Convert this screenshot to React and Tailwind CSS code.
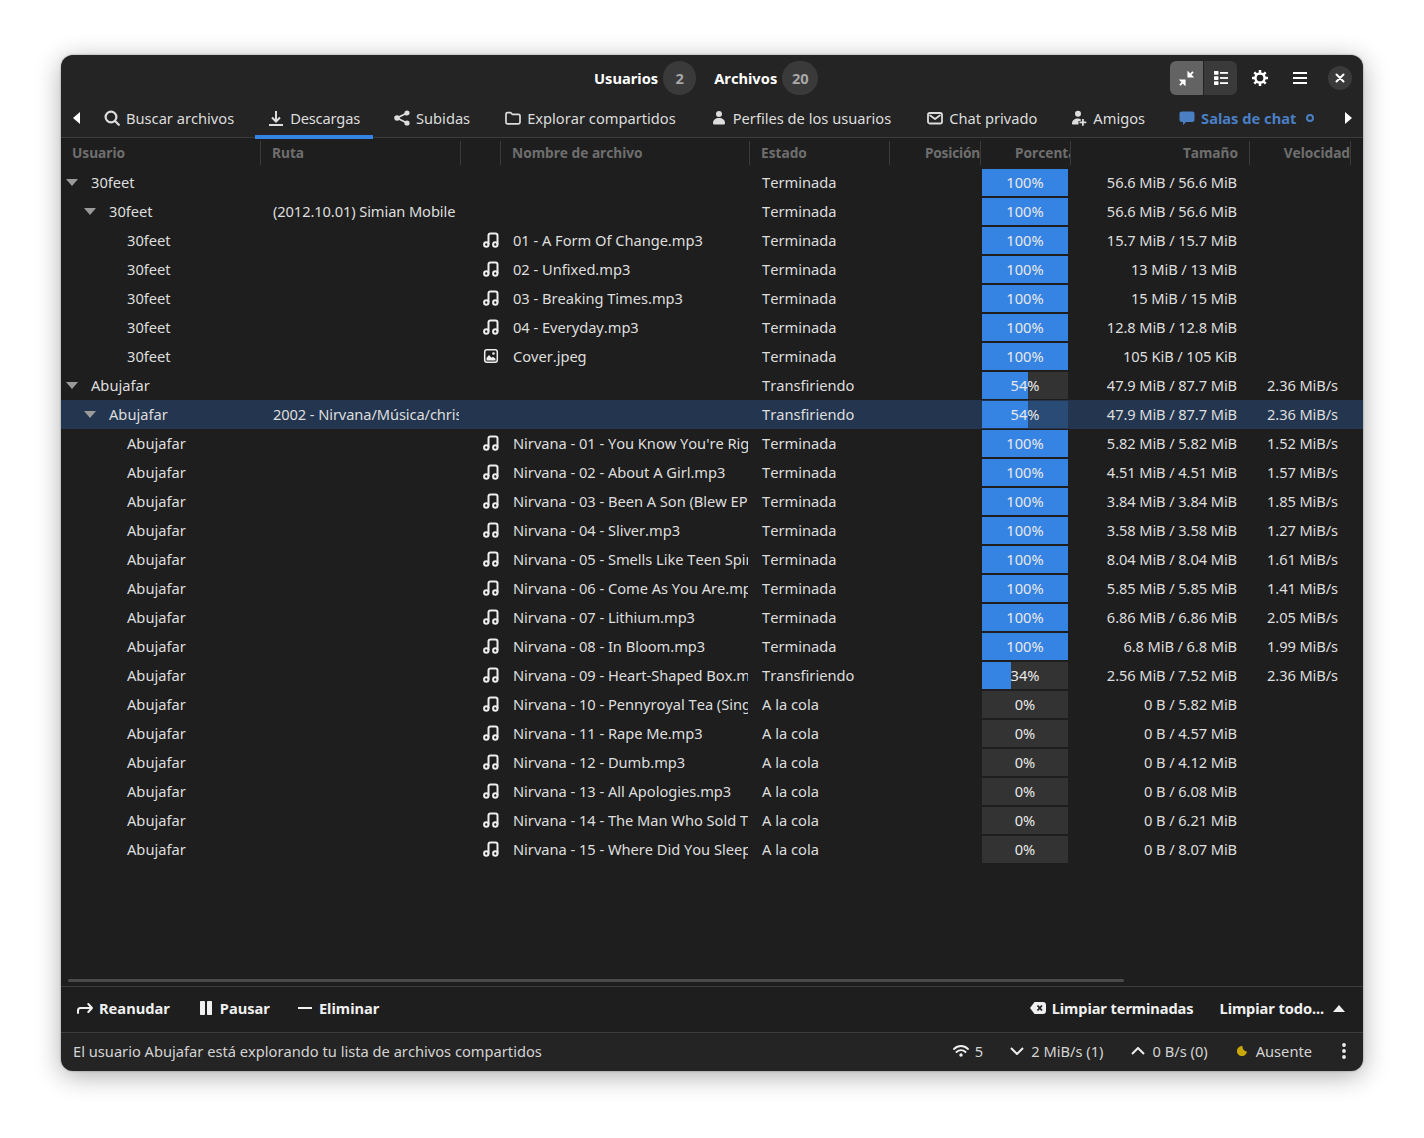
const rows = [
  { lvl: 0, user: '30feet', state: 'Terminada', pct: 100, size: '56.6 MiB / 56.6 MiB' },
  { lvl: 1, user: '30feet', path: '(2012.10.01) Simian Mobile Disco - Unpatterns', state: 'Terminada', pct: 100, size: '56.6 MiB / 56.6 MiB' },
  { lvl: 2, user: '30feet', name: '01 - A Form Of Change.mp3', state: 'Terminada', pct: 100, size: '15.7 MiB / 15.7 MiB' },
  { lvl: 2, user: '30feet', name: '02 - Unfixed.mp3', state: 'Terminada', pct: 100, size: '13 MiB / 13 MiB' },
  { lvl: 2, user: '30feet', name: '03 - Breaking Times.mp3', state: 'Terminada', pct: 100, size: '15 MiB / 15 MiB' },
  { lvl: 2, user: '30feet', name: '04 - Everyday.mp3', state: 'Terminada', pct: 100, size: '12.8 MiB / 12.8 MiB' },
  { lvl: 2, user: '30feet', name: 'Cover.jpeg', image: true, state: 'Terminada', pct: 100, size: '105 KiB / 105 KiB' },
  { lvl: 0, user: 'Abujafar', state: 'Transfiriendo', pct: 54, size: '47.9 MiB / 87.7 MiB', speed: '2.36 MiB/s' },
  { lvl: 1, user: 'Abujafar', path: '2002 - Nirvana/Música/chris/Nirvana', state: 'Transfiriendo', pct: 54, size: '47.9 MiB / 87.7 MiB', speed: '2.36 MiB/s', selected: true },
  { lvl: 2, user: 'Abujafar', name: "Nirvana - 01 - You Know You're Right.mp3", state: 'Terminada', pct: 100, size: '5.82 MiB / 5.82 MiB', speed: '1.52 MiB/s' },
  { lvl: 2, user: 'Abujafar', name: 'Nirvana - 02 - About A Girl.mp3', state: 'Terminada', pct: 100, size: '4.51 MiB / 4.51 MiB', speed: '1.57 MiB/s' },
  { lvl: 2, user: 'Abujafar', name: 'Nirvana - 03 - Been A Son (Blew EP).mp3', state: 'Terminada', pct: 100, size: '3.84 MiB / 3.84 MiB', speed: '1.85 MiB/s' },
  { lvl: 2, user: 'Abujafar', name: 'Nirvana - 04 - Sliver.mp3', state: 'Terminada', pct: 100, size: '3.58 MiB / 3.58 MiB', speed: '1.27 MiB/s' },
  { lvl: 2, user: 'Abujafar', name: 'Nirvana - 05 - Smells Like Teen Spirit.mp3', state: 'Terminada', pct: 100, size: '8.04 MiB / 8.04 MiB', speed: '1.61 MiB/s' },
  { lvl: 2, user: 'Abujafar', name: 'Nirvana - 06 - Come As You Are.mp3', state: 'Terminada', pct: 100, size: '5.85 MiB / 5.85 MiB', speed: '1.41 MiB/s' },
  { lvl: 2, user: 'Abujafar', name: 'Nirvana - 07 - Lithium.mp3', state: 'Terminada', pct: 100, size: '6.86 MiB / 6.86 MiB', speed: '2.05 MiB/s' },
  { lvl: 2, user: 'Abujafar', name: 'Nirvana - 08 - In Bloom.mp3', state: 'Terminada', pct: 100, size: '6.8 MiB / 6.8 MiB', speed: '1.99 MiB/s' },
  { lvl: 2, user: 'Abujafar', name: 'Nirvana - 09 - Heart-Shaped Box.mp3', state: 'Transfiriendo', pct: 34, size: '2.56 MiB / 7.52 MiB', speed: '2.36 MiB/s' },
  { lvl: 2, user: 'Abujafar', name: 'Nirvana - 10 - Pennyroyal Tea (Single).mp3', state: 'A la cola', pct: 0, size: '0 B / 5.82 MiB' },
  { lvl: 2, user: 'Abujafar', name: 'Nirvana - 11 - Rape Me.mp3', state: 'A la cola', pct: 0, size: '0 B / 4.57 MiB' },
  { lvl: 2, user: 'Abujafar', name: 'Nirvana - 12 - Dumb.mp3', state: 'A la cola', pct: 0, size: '0 B / 4.12 MiB' },
  { lvl: 2, user: 'Abujafar', name: 'Nirvana - 13 - All Apologies.mp3', state: 'A la cola', pct: 0, size: '0 B / 6.08 MiB' },
  { lvl: 2, user: 'Abujafar', name: 'Nirvana - 14 - The Man Who Sold The World.mp3', state: 'A la cola', pct: 0, size: '0 B / 6.21 MiB' },
  { lvl: 2, user: 'Abujafar', name: 'Nirvana - 15 - Where Did You Sleep Last Night.mp3', state: 'A la cola', pct: 0, size: '0 B / 8.07 MiB' },
];

function Icon({ className = 'w-4 h-4', children, fill = 'none', strokeWidth = '2' }) {
  return (
    <svg viewBox="0 0 16 16" className={`shrink-0 ${className}`} fill={fill} stroke={fill === 'none' ? 'currentColor' : 'none'} strokeWidth={strokeWidth} strokeLinecap="round" strokeLinejoin="round">
      {children}
    </svg>
  );
}

const SearchIcon = () => (
  <Icon strokeWidth="2.200"><circle cx="7" cy="7" r="5.400" /><path d="m11 11 3.800 3.800" /></Icon>
);
const DownloadIcon = () => (
  <svg viewBox="1 0 14 16" className="mr-[1px] h-4 w-[14px] shrink-0" fill="none" stroke="currentColor" strokeWidth="2">
    <path d="M8 1v10M4 7.500 8 11.500l4-4M1 15h14" />
  </svg>
);
const ShareIcon = () => (
  <svg viewBox="0 0 16 16" className="h-4 w-4 shrink-0" fill="currentColor" stroke="currentColor" strokeWidth="1.800">
    <path d="M13 3 3 8l10 5" fill="none" />
    <circle cx="13" cy="3" r="1.700" />
    <circle cx="3" cy="8" r="1.900" />
    <circle cx="13" cy="13" r="1.700" />
  </svg>
);
const FolderIcon = () => (
  <Icon strokeWidth="1.700"><path d="M1 4.200c0-.9.6-1.500 1.500-1.500h3.300l1.400 1.600h6.300c.9 0 1.500.6 1.500 1.500v6.500c0 .9-.6 1.500-1.500 1.500h-11C1.600 13.800 1 13.200 1 12.300z" /></Icon>
);
const UserIcon = () => (
  <Icon fill="currentColor"><circle cx="8" cy="4" r="3" /><path d="M2 13c0-3 2.500-5 6-5s6 2 6 5c0 1-.6 1.500-1.500 1.500h-9C2.600 14.500 2 14 2 13z" /></Icon>
);
const MailIcon = () => (
  <Icon strokeWidth="1.800"><rect x="1" y="3" width="14" height="10.500" rx="1.800" /><path d="m3.200 5.500 4.800 3.500 4.800-3.500" /></Icon>
);
const FriendIcon = () => (
  <Icon fill="currentColor">
    <circle cx="7" cy="3.800" r="3" />
    <path d="M1 13.500c0-3 2.500-5 6-5 1 0 1.900.2 2.700.5V11H7.500v3.500H2c-.6 0-1-.4-1-1z" />
    <path d="M11 9h1.800v2.500h2.500v1.800h-2.500v2.500H11v-2.500H8.500v-1.800H11z" />
  </Icon>
);
const ChatIcon = () => (
  <Icon fill="currentColor"><path d="M3 1.500h10.500c1.200 0 2 .8 2 2v6.500c0 1.200-.8 2-2 2H7l-3 3v-3H3c-1.500 0-2.500-.8-2.500-2V3.500c0-1.200 1-2 2.500-2z" /></Icon>
);
const MusicIcon = () => (
  <svg viewBox="0 0 16 16" className="h-4 w-4 shrink-0" fill="none" stroke="currentColor" strokeWidth="2">
    <circle cx="3.300" cy="12.500" r="2.200" />
    <circle cx="12.300" cy="12.500" r="2.200" />
    <path d="M5.500 12.500V3.500c0-1.200.8-2 2-2h5c1.200 0 2 .8 2 2v9" />
  </svg>
);
const ImageIcon = () => (
  <svg viewBox="0 0 16 16" className="h-4 w-4 shrink-0">
    <rect x="1.700" y="1.700" width="12.600" height="12.600" rx="2.200" fill="none" stroke="currentColor" strokeWidth="1.500" />
    <circle cx="10.500" cy="5.500" r="1.300" fill="currentColor" />
    <path d="M3.500 12.500V10l2.500-3 2.500 2.700 1.500-1 2.500 2v1.800z" fill="currentColor" />
  </svg>
);

function Tab({ icon, label, active, className = '' }) {
  return (
    <div className={`relative flex h-[39px] items-center gap-[6px] pl-[14px] pr-[13px] ${className}`}>
      {icon}
      <span>{label}</span>
      {active ? <div className="absolute bottom-[-1px] left-0 right-0 h-[4px] bg-[#3584e4]" /> : null}
    </div>
  );
}

function Row({ row }) {
  const pad = ['pl-[30px]', 'pl-[48px]', 'pl-[66px]'][row.lvl];
  const arrowPos = ['left-[5px]', 'left-[23px]'][row.lvl];
  return (
    <div className={`flex h-[29px] items-center whitespace-nowrap pb-[2px] text-[#dedede] ${row.selected ? 'bg-[#24364f]' : ''}`}>
      <div className={`relative w-[200px] shrink-0 overflow-hidden ${pad}`}>
        {row.lvl < 2 ? (
          <svg viewBox="0 0 12 7" className={`absolute top-[8px] h-[7px] w-[12px] ${arrowPos}`}>
            <path d="M0 0h12L6 7z" fill="#9a9a9a" />
          </svg>
        ) : null}
        {row.user}
      </div>
      <div className="w-[200px] shrink-0 pl-[12px] pr-[2px] tracking-[-0.1px]">
        <div className="overflow-hidden">{row.path}</div>
      </div>
      <div className="flex w-[40px] shrink-0 items-center pl-[22px] text-[#eeeeee]">
        {row.name ? (row.image ? <ImageIcon /> : <MusicIcon />) : null}
      </div>
      <div className="w-[248px] shrink-0 pl-[12px] pr-[1px] tracking-[-0.03px]">
        <div className="overflow-hidden">{row.name}</div>
      </div>
      <div className="w-[232px] shrink-0 pl-[13px]">{row.state}</div>
      <div className="w-[90px] shrink-0 pl-[1px]">
        <div className={`relative top-[1px] h-[27px] w-[86px] text-center leading-[27px] text-[#e8e8e8] ${row.selected ? 'bg-[#2a4b75]' : 'bg-[#333333]'}`}>
          <div className="absolute inset-y-0 left-0 bg-[#3584e4]" style={{ width: `${row.pct}%` }} />
          <span className="relative">{row.pct}%</span>
        </div>
      </div>
      <div className="w-[166px] shrink-0 text-right tracking-[-0.1px]">{row.size}</div>
      <div className="w-[101px] shrink-0 text-right tracking-[-0.1px]">{row.speed}</div>
    </div>
  );
}

function HeaderCell({ className = '', children }) {
  return (
    <div className={`flex h-[24px] shrink-0 items-center overflow-hidden border-r border-[#3a3a3a] ${className}`}>
      {children}
    </div>
  );
}

export default function App() {
  return (
    <div className="h-[1138px] bg-white pl-[61px] pt-[55px] font-['Noto_Sans',sans-serif] text-[14.67px] [font-kerning:none]">
      <div className="flex h-[1016px] w-[1302px] flex-col overflow-hidden rounded-[12px] bg-[#242424] text-[#dedede] shadow-[0_5px_26px_rgba(0,0,0,0.32),0_0_2px_rgba(0,0,0,0.4)]">
        <div className="flex h-[43px] shrink-0 items-end pb-[3px] pl-[533px] pr-[11px]">
          <div className="flex h-[34px] items-center font-bold text-white">
            <span>Usuarios</span>
            <span className="ml-[5px] flex h-[34px] w-[33px] items-center justify-center rounded-full bg-[#3a3a3a] text-[#a8a8a8]">2</span>
            <span className="ml-[18px]">Archivos</span>
            <span className="ml-[5px] flex h-[34px] w-[36px] items-center justify-center rounded-full bg-[#3a3a3a] text-[#a8a8a8]">20</span>
          </div>
          <div className="ml-auto flex h-[34px] items-center text-white">
            <div className="flex h-[34px] w-[34px] items-center justify-center rounded-l-[6px] border-r border-[#242424] bg-[#636363]">
              <svg viewBox="0 0 16 16" className="h-[15px] w-[15px]" fill="currentColor" stroke="currentColor" strokeWidth="2">
                <path d="M10 6 15 1M2 10h4v4zM10 2v4h4z" />
                <path d="M6 10l-5 5" />
              </svg>
            </div>
            <div className="flex h-[34px] w-[33px] items-center justify-center rounded-r-[6px] bg-[#3a3a3a]">
              <svg viewBox="0 0 16 16" className="h-4 w-4" fill="currentColor">
                <rect x="1" y="1" width="4.500" height="3.700" rx="0.700" />
                <rect x="1" y="6.200" width="4.500" height="3.700" rx="0.700" />
                <rect x="1" y="11.300" width="4.500" height="3.700" rx="0.700" />
                <rect x="7" y="2" width="8" height="1.800" />
                <rect x="7" y="7.100" width="8" height="1.800" />
                <rect x="7" y="12.200" width="8" height="1.800" />
              </svg>
            </div>
            <div className="ml-[15px] flex w-[16px] justify-center">
              <svg viewBox="0 0 16 16" className="h-4 w-4" fill="none" stroke="currentColor">
                <circle cx="8" cy="8" r="4.600" strokeWidth="2.500" />
                <path d="M8 0v3M8 13v3M0 8h3M13 8h3M2.300 2.300l2.100 2.100M11.600 11.600l2.100 2.100M2.300 13.700l2.100-2.100M11.600 4.400l2.100-2.100" strokeWidth="2.500" />
              </svg>
            </div>
            <div className="ml-[24px] flex w-[16px] justify-center">
              <svg viewBox="0 0 16 16" className="h-4 w-4" fill="currentColor">
                <rect x="1" y="2" width="14" height="2" />
                <rect x="1" y="7" width="14" height="2" />
                <rect x="1" y="12" width="14" height="2" />
              </svg>
            </div>
            <div className="ml-[20px] flex h-[24px] w-[24px] items-center justify-center rounded-full bg-[#3a3a3a]">
              <svg viewBox="0 0 10 10" className="h-[10px] w-[10px]" stroke="currentColor" strokeWidth="2" strokeLinecap="round">
                <path d="M1.500 1.500l7 7M8.500 1.500l-7 7" />
              </svg>
            </div>
          </div>
        </div>

        <div className="flex h-[40px] shrink-0 items-center whitespace-nowrap border-b border-[#3c3c3c] pt-[1px] text-[#dddddd]">
          <svg viewBox="0 0 7 12" className="ml-[12px] h-[12px] w-[7px] shrink-0"><path d="M7 0v12L0 6z" fill="#fff" /></svg>
          <Tab className="ml-[10px]" icon={<SearchIcon />} label="Buscar archivos" />
          <Tab className="ml-[8px] tracking-[-0.2px]" active icon={<DownloadIcon />} label="Descargas" />
          <Tab className="ml-[7px]" icon={<ShareIcon />} label="Subidas" />
          <Tab className="ml-[8px]" icon={<FolderIcon />} label="Explorar compartidos" />
          <Tab className="ml-[8px]" icon={<UserIcon />} label="Perfiles de los usuarios" />
          <Tab className="ml-[9px]" icon={<MailIcon />} label="Chat privado" />
          <Tab className="ml-[7px]" icon={<FriendIcon />} label="Amigos" />
          <div className="ml-[7px] flex h-[39px] items-center gap-[6px] pl-[14px] font-bold text-[#4a7fc4]">
            <ChatIcon />
            <span>Salas de chat</span>
            <span className="ml-[4px] h-[8px] w-[8px] rounded-full border-2 border-[#4a7fc4]" />
          </div>
          <svg viewBox="0 0 7 12" className="ml-[31px] h-[12px] w-[7px] shrink-0"><path d="M0 0v12l7-6z" fill="#fff" /></svg>
        </div>

        <div className="flex min-h-0 flex-1 flex-col bg-[#1e1e1e]">
          <div className="flex h-[30px] shrink-0 items-center whitespace-nowrap text-[13.7px] font-bold text-[#6e6e6e]">
            <HeaderCell className="w-[200px] pl-[11px]">Usuario</HeaderCell>
            <HeaderCell className="w-[200px] pl-[11px]">Ruta</HeaderCell>
            <HeaderCell className="w-[40px]" />
            <HeaderCell className="w-[249px] pl-[11px]">Nombre de archivo</HeaderCell>
            <HeaderCell className="w-[140px] pl-[11px]">Estado</HeaderCell>
            <HeaderCell className="w-[91px] justify-end tracking-[-0.2px]">Posición</HeaderCell>
            <HeaderCell className="w-[90px] pl-[34px]">Porcentaje</HeaderCell>
            <HeaderCell className="w-[179px] justify-end pr-[11px]">Tamaño</HeaderCell>
            <HeaderCell className="w-[101px] justify-end">Velocidad</HeaderCell>
          </div>
          {rows.map((row, i) => (
            <Row key={i} row={row} />
          ))}
          <div className="mt-auto pb-[4px] pl-[7px]">
            <div className="h-[3px] w-[1056px] rounded-full bg-[#4a4a4a]" />
          </div>
        </div>

        <div className="flex h-[47px] shrink-0 items-center whitespace-nowrap border-y border-[#3c3c3c] bg-[#1e1e1e] pb-[3px] pl-[16px] pr-[18px] font-bold text-[#f0f0f0]">
          <Icon><path d="M1 13v-2.500C1 9 2 8 3.500 8H15M11.300 4 15 8l-3.700 4" /></Icon>
          <span className="ml-[6px]">Reanudar</span>
          <svg viewBox="0 0 12 16" className="ml-[30px] h-[16px] w-[12px] shrink-0" fill="currentColor">
            <rect x="0" y="1" width="5" height="14" rx="0.800" />
            <rect x="7" y="1" width="5" height="14" rx="0.800" />
          </svg>
          <span className="ml-[8px]">Pausar</span>
          <div className="ml-[28px] h-[2px] w-[14px] shrink-0 bg-current" />
          <span className="ml-[7px]">Eliminar</span>
          <svg viewBox="0 0 16 12" className="ml-auto h-[12px] w-[16px] shrink-0">
            <path d="M4.500 0H13c1.800 0 3 1.200 3 3v6c0 1.800-1.200 3-3 3H4.500L0 6z" fill="currentColor" />
            <path d="M7.500 3.500l4.500 5M12 3.500l-4.500 5" stroke="#1e1e1e" strokeWidth="1.800" />
          </svg>
          <span className="ml-[6px] tracking-[-0.1px]">Limpiar terminadas</span>
          <span className="ml-[26px] tracking-[-0.1px]">Limpiar todo...</span>
          <svg viewBox="0 0 12 7" className="ml-[9px] h-[7px] w-[12px] shrink-0"><path d="M0 7h12L6 0z" fill="currentColor" /></svg>
        </div>

        <div className="flex h-[38px] shrink-0 items-center whitespace-nowrap pb-[2px] pl-[12px] pr-[17px] text-[#d4d4d4]">
          <span>El usuario Abujafar está explorando tu lista de archivos compartidos</span>
          <svg viewBox="0 0 16 14" className="ml-auto h-[14px] w-[16px] shrink-0 text-[#eeeeee]" fill="none" stroke="currentColor" strokeWidth="1.800" strokeLinecap="round">
            <path d="M1 5c4-4 10-4 14 0M3.500 8c2.500-2.500 6.500-2.500 9 0" />
            <circle cx="8" cy="11" r="1.700" fill="currentColor" stroke="none" />
          </svg>
          <span className="ml-[6px]">5</span>
          <svg viewBox="0 0 14 8" className="ml-[27px] h-[8px] w-[14px] shrink-0 text-[#eeeeee]" fill="none" stroke="currentColor" strokeWidth="2"><path d="M1 1l6 6 6-6" /></svg>
          <span className="ml-[7px]">2 MiB/s (1)</span>
          <svg viewBox="0 0 14 8" className="ml-[28px] h-[8px] w-[14px] shrink-0 text-[#eeeeee]" fill="none" stroke="currentColor" strokeWidth="2"><path d="M1 7l6-6 6 6" /></svg>
          <span className="ml-[7px]">0 B/s (0)</span>
          <svg viewBox="0 0 10 10" className="ml-[29px] h-[10px] w-[10px] shrink-0"><path d="M5.500.1A5 5 0 1 0 9.900 5.500 4.800 4.800 0 0 1 5.500.1z" fill="#c8a808" /></svg>
          <span className="ml-[9px]">Ausente</span>
          <svg viewBox="0 0 4 16" className="ml-[30px] h-[16px] w-[4px] shrink-0" fill="#eeeeee">
            <circle cx="2" cy="2" r="1.900" />
            <circle cx="2" cy="8" r="1.900" />
            <circle cx="2" cy="14" r="1.900" />
          </svg>
        </div>
      </div>
    </div>
  );
}
